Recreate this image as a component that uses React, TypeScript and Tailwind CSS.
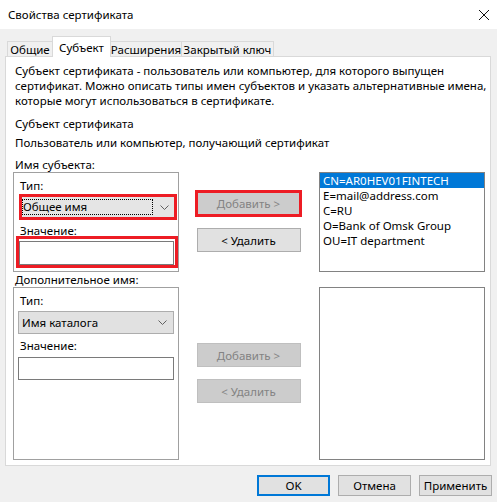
import React from "react";

const font = { fontFamily: '"Noto Sans", "Segoe UI", sans-serif' };

function Chevron() {
  return (
    <svg width="9" height="5" viewBox="0 0 9 5" className="shrink-0">
      <path d="M0.5 0.5 L4.5 4.5 L8.5 0.5" fill="none" stroke="#606060" strokeWidth="1" />
    </svg>
  );
}

export default function App() {
  return (
    <div
      className="w-[497px] h-[502px] bg-[#f0f0f0] flex flex-col text-[11.5px] text-black leading-[15px] whitespace-nowrap overflow-hidden"
      style={font}
    >
      {/* Title bar */}
      <div className="h-[29px] bg-white flex items-center justify-between pl-[8px] pr-[8px] shrink-0">
        <span>Свойства сертификата</span>
        <svg width="10" height="10" viewBox="0 0 10 10">
          <path d="M0 0 L10 10 M10 0 L0 10" stroke="#111" strokeWidth="1" />
        </svg>
      </div>

      {/* Tabs */}
      <div className="flex items-end h-[20px] mt-[7px] ml-[7px] relative z-10 shrink-0">
        <div className="h-[15px] w-[45px] border-t border-l border-[#d9d9d9] flex items-center justify-center bg-[#f0f0f0]">
          Общие
        </div>
        <div className="h-[21px] w-[59px] -mb-px border-t border-l border-r border-[#d9d9d9] bg-white flex items-start pt-[3px] justify-center">
          Субъект
        </div>
        <div className="h-[15px] w-[71px] border-t border-r border-[#d9d9d9] flex items-center justify-center bg-[#f0f0f0]">
          Расширения
        </div>
        <div className="h-[15px] w-[92px] border-t border-r border-[#d9d9d9] flex items-center justify-center bg-[#f0f0f0]">
          Закрытый ключ
        </div>
      </div>

      {/* Panel */}
      <div className="ml-[5px] w-[486px] h-[410px] bg-white border border-[#d9d9d9] pl-[7px] pt-[6px] shrink-0 flex flex-col">
        <div className="ml-[2px]">
          Субъект сертификата - пользователь или компьютер, для которого выпущен
          <br />
          сертификат. Можно описать типы имен субъектов и указать альтернативные имена,
          <br />
          которые могут использоваться в сертификате.
        </div>
        <div className="ml-[2px] mt-[8px]">Субъект сертификата</div>
        <div className="ml-[2px] mt-[4px]">Пользователь или компьютер, получающий сертификат</div>
        <div className="ml-[2px] mt-[7px]">Имя субъекта:</div>

        <div className="flex">
          {/* Left column */}
          <div className="w-[166px] flex flex-col">
            <div className="h-[100px] border border-[#a0a0a0] pt-[5px] flex flex-col">
              <div className="ml-[6px]">Тип:</div>
              <div className="ml-[5px] mt-[1px] w-[158px] h-[26px] border-[3px] border-[#ed1c24] bg-[#e5e5e5] flex items-center pr-[5px]">
                <div className="h-[16px] w-[131px] border border-dotted border-black flex items-center leading-[14px]">
                  Общее имя
                </div>
                <div className="flex-1 flex justify-end">
                  <Chevron />
                </div>
              </div>
              <div className="ml-[6px] mt-[3px]">Значение:</div>
              <div className="ml-[2px] -mt-[2px] w-[162px] h-[32px] border-[3px] border-[#ed1c24] pt-[2px]">
                <div className="w-[155px] h-[24px] border border-[#7a7a7a] bg-white" />
              </div>
            </div>
            <div className="ml-[2px] h-[15px]">Дополнительное имя:</div>
            <div className="h-[173px] border border-[#a0a0a0] pt-[5px] flex flex-col">
              <div className="ml-[6px]">Тип:</div>
              <div className="ml-[4px] mt-[3px] w-[156px] h-[23px] border border-[#adadad] bg-[#e1e1e1] flex items-center justify-between pl-[3px] pr-[6px]">
                <span>Имя каталога</span>
                <Chevron />
              </div>
              <div className="ml-[6px] mt-[4px]">Значение:</div>
              <div className="ml-[4px] mt-[4px] w-[156px] h-[23px] border border-[#7a7a7a] bg-white" />
            </div>
          </div>

          {/* Middle column */}
          <div className="ml-[16px] w-[107px] flex flex-col items-center pt-[18px]">
            <div className="w-[107px] h-[27px] border-[3px] border-[#ed1c24] bg-[#cccccc] flex items-center justify-center text-[#838383]">
              Добавить &gt;
            </div>
            <div className="mt-[11px] w-[104px] h-[24px] border border-[#adadad] bg-[#e1e1e1] flex items-center justify-center">
              &lt; Удалить
            </div>
            <div className="mt-[91px] w-[104px] h-[24px] border border-[#bfbfbf] bg-[#cccccc] flex items-center justify-center text-[#838383]">
              Добавить &gt;
            </div>
            <div className="mt-[12px] w-[104px] h-[24px] border border-[#bfbfbf] bg-[#cccccc] flex items-center justify-center text-[#838383]">
              &lt; Удалить
            </div>
          </div>

          {/* Right column */}
          <div className="ml-[17px] w-[166px] flex flex-col">
            <div className="h-[100px] border border-[#828282] bg-white flex flex-col">
              <div className="h-[15px] bg-[#0078d7] text-white pl-[3px] flex items-center">CN=AR0HEV01FINTECH</div>
              <div className="h-[15px] pl-[3px] flex items-center">E=mail@address.com</div>
              <div className="h-[15px] pl-[3px] flex items-center">C=RU</div>
              <div className="h-[15px] pl-[3px] flex items-center">O=Bank of Omsk Group</div>
              <div className="h-[15px] pl-[3px] flex items-center">OU=IT department</div>
            </div>
            <div className="mt-[15px] h-[173px] border border-[#828282] bg-white" />
          </div>
        </div>
      </div>

      {/* Bottom buttons */}
      <div className="flex justify-end gap-[8px] pr-[5px] mt-[9px] shrink-0">
        <div className="w-[73px] h-[21px] border-2 border-[#0078d7] bg-[#e1e1e1] flex items-center justify-center">
          OK
        </div>
        <div className="w-[73px] h-[21px] border border-[#adadad] bg-[#e1e1e1] flex items-center justify-center">
          Отмена
        </div>
        <div className="w-[73px] h-[21px] border border-[#adadad] bg-[#e1e1e1] flex items-center justify-center">
          Применить
        </div>
      </div>
    </div>
  );
}
